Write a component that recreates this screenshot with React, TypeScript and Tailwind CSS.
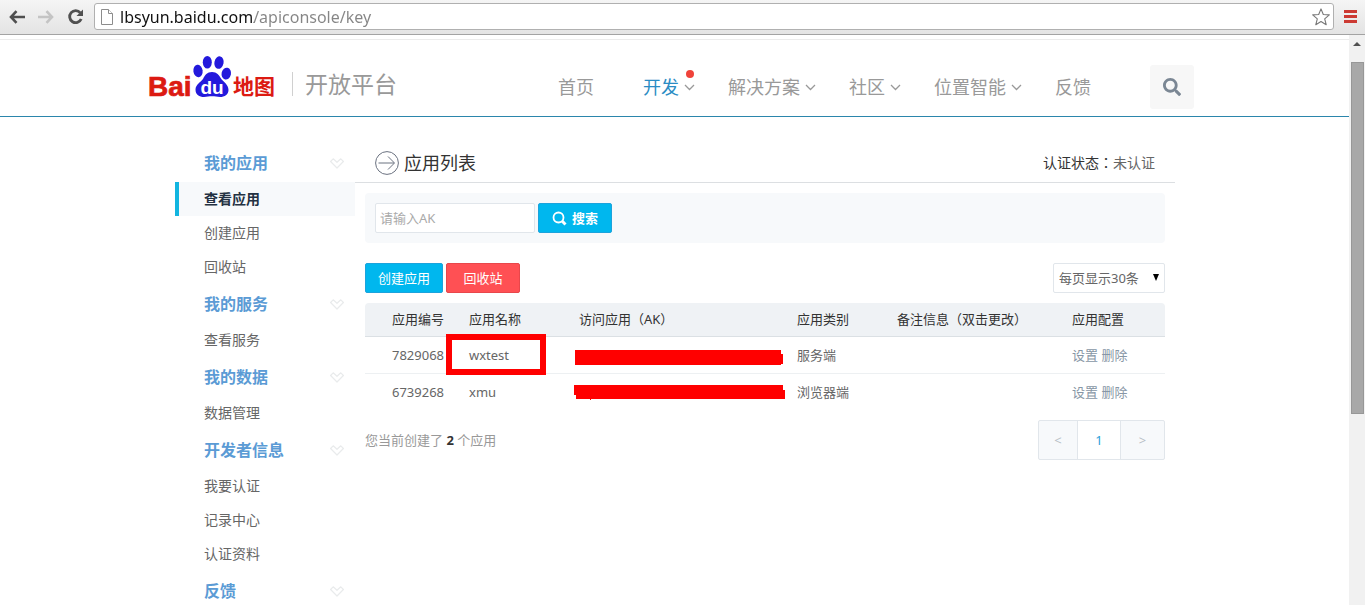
import { useState } from 'react'
import { FaSearch } from 'react-icons/fa'
import { cva } from 'class-variance-authority'
import clsx from 'clsx'

interface NavItem {
  label: string
  menu?: boolean
  active?: boolean
  dot?: boolean
}

interface AppRow {
  id: string
  name: string
  kind: string
  mask: string
  highlighted?: boolean
}

const navItems: NavItem[] = [
  { label: '首页' },
  { label: '开发', menu: true, active: true, dot: true },
  { label: '解决方案', menu: true },
  { label: '社区', menu: true },
  { label: '位置智能', menu: true },
  { label: '反馈' },
]

const sideGroups = [
  { title: '我的应用', items: ['查看应用', '创建应用', '回收站'] },
  { title: '我的服务', items: ['查看服务'] },
  { title: '我的数据', items: ['数据管理'] },
  { title: '开发者信息', items: ['我要认证', '记录中心', '认证资料'] },
  { title: '反馈', items: [] },
]

const apps: AppRow[] = [
  { id: '7829068', name: 'wxtest', kind: '服务端', mask: 'M1 2H207V6H209V16H207V17H1Z', highlighted: true },
  { id: '6739268', name: 'xmu', kind: '浏览器端', mask: 'M0 0H209V5H211V14H17V15H16V14H2V10H0Z' },
]

const button = cva('flex h-[30px] items-center justify-center rounded-xs border text-white', {
  variants: {
    tone: {
      blue: 'border-[#1ca3dc] bg-[#00b7ee]',
      red: 'border-[#e8474b] bg-[#ff5054]',
    },
  },
})

function BrowserBar() {
  return (
    <div className="flex h-[35px] shrink-0 items-center border-b border-[#a3a3a3] bg-linear-to-b from-[#f5f5f5] to-[#e4e4e4] pr-2 pb-px pl-[9px]">
      <button type="button" aria-label="后退" className="w-[29px]">
        <svg width="16" height="14" viewBox="0 0 16 14" fill="none" stroke="#4f4f4f" strokeWidth="2.6">
          <path d="M7.5 1.2 2 7l5.5 5.8M2 7h14" />
        </svg>
      </button>
      <button type="button" aria-label="前进" className="w-[29px]">
        <svg width="16" height="14" viewBox="0 0 16 14" fill="none" stroke="#c4c4c4" strokeWidth="2.6">
          <path d="M8.5 1.2 14 7l-5.5 5.8M14 7H0" />
        </svg>
      </button>
      <button type="button" aria-label="重新加载" className="w-[27px]">
        <svg width="18" height="16" viewBox="0 0 18 16" fill="none">
          <path d="M13.3 3.8A6 6 0 1 0 14.2 10" stroke="#505050" strokeWidth="2.8" />
          <path d="M16 0.5V7H9.5Z" fill="#505050" />
        </svg>
      </button>
      <div className="flex h-[27px] min-w-0 flex-1 items-center rounded-[3px] border border-[#b0b0b0] bg-white pr-[3px] pl-[6px]">
        <svg width="12" height="16" viewBox="0 0 12 16" fill="#fff" stroke="#8c8c8c" className="shrink-0">
          <path d="M0.5 0.5H7.5L11.5 4.5V15.500H0.5Z" />
          <path d="M7.5 0.5V4.5H11.5" />
        </svg>
        <input
          type="text"
          aria-label="地址"
          defaultValue="lbsyun.baidu.com/apiconsole/key"
          className="ml-[7px] h-6 min-w-0 flex-1 bg-[linear-gradient(to_right,#111_134px,#858585_134px)] bg-clip-text text-[16px] leading-6 text-transparent outline-none"
        />
        <button type="button" aria-label="收藏" className="shrink-0">
          <svg width="18" height="18" viewBox="0 0 18 18" fill="#fff" stroke="#777" strokeWidth="1.1" strokeLinejoin="round">
            <path d="M9 0.9 11.3 6.5 17.3 6.9 12.7 10.8 14.2 16.7 9 13.5 3.8 16.7 5.3 10.8 0.7 6.9 6.7 6.5Z" />
          </svg>
        </button>
      </div>
      <button type="button" aria-label="菜单" className="ml-[10px] flex w-[13px] flex-col gap-[2px]">
        <span className="h-[3px] bg-[#cc3a33]" />
        <span className="h-[3px] bg-[#cc3a33]" />
        <span className="h-[3px] bg-[#cc3a33]" />
      </button>
    </div>
  )
}

function Logo() {
  return (
    <svg width="130" height="48" viewBox="-1 0 130 48" className="-ml-px shrink-0" role="img" aria-label="百度地图">
      <text
        x="-1"
        y="40.5"
        fontSize="28"
        fill="#dc1a12"
        stroke="#dc1a12"
        strokeWidth="0.7"
        fontFamily="'Liberation Sans', sans-serif"
        fontWeight="700"
      >
        Bai
      </text>
      <g fill="#2319dc">
        <ellipse cx="49" cy="16" rx="4.6" ry="6.2" transform="rotate(-8 49 16)" />
        <ellipse cx="58.3" cy="7.2" rx="4.5" ry="6.3" />
        <ellipse cx="70" cy="7.6" rx="4.6" ry="6.3" transform="rotate(12 70 7.6)" />
        <ellipse cx="77.3" cy="18.6" rx="4.7" ry="6" transform="rotate(12 77.3 18.6)" />
        <path d="M63 17c5 0 7 3 9 6.500 2 3 7.500 6 7.500 11.500 0 4.500-4 7-8.500 7-3 0-5-.7-8-.7s-5 .7-8 .7c-4.500 0-8.500-2-8.500-7.500 0-5 5.500-7.500 7.500-10.500 2-4 4-7 9-7Z" />
      </g>
      <text x="51.500" y="38.500" fontSize="19" fill="#fff" fontFamily="'Liberation Sans', sans-serif" fontWeight="700">
        du
      </text>
      <text x="84" y="39" fontSize="21" fill="#dc1a12" fontFamily="'Noto Sans CJK SC', sans-serif" fontWeight="700">
        地图
      </text>
    </svg>
  )
}

function SiteHeader() {
  return (
    <header className="border-b border-[#2b86ac]">
      <div className="h-[5px] border-b border-[#ececec]" />
      <div className="mx-auto flex h-[76px] w-full max-w-[1051px] items-end pr-[6px] pb-[7px]">
        <a href="#" className="flex items-end pb-[6px]">
          <Logo />
          <span className="mr-3 mb-[7px] ml-[14px] h-6 w-px bg-[#d0d0d0]" />
          <span className="mb-[7px] text-[23px] leading-6 whitespace-nowrap text-[#999]">开放平台</span>
        </a>
        <nav className="ml-auto flex h-11 items-center gap-[33px] text-[18px] leading-6 text-[#999]">
          {navItems.map((item) => (
            <a
              key={item.label}
              href="#"
              className={clsx('relative flex items-center gap-[5px] whitespace-nowrap', item.active && 'text-[#2b8cc4]')}
            >
              {item.label}
              <svg width="11" height="7" viewBox="0 0 11 7" fill="none" stroke="#999" strokeWidth="1.3">
                {item.menu && <path d="M1 1 5.5 5.5 10 1" />}
              </svg>
              {item.dot && <span className="absolute -top-[5px] right-[1px] size-2 rounded-full bg-[#f0433a]" />}
            </a>
          ))}
        </nav>
        <button type="button" aria-label="搜索" className="ml-[43px] flex size-11 items-center justify-center rounded-[3px] bg-[#f7f7f7]">
          <FaSearch className="size-[18px] text-[#7b8794]" />
        </button>
      </div>
    </header>
  )
}

function HeartChevron() {
  return (
    <svg width="14" height="13" viewBox="0 -2 14 13" fill="none" stroke="#e9ebec" strokeWidth="1.2" strokeLinejoin="round">
      <path d="M0.600 3.500 3.200 0.800 7 4.300 10.800 0.800 13.400 3.500 7 10Z" />
    </svg>
  )
}

function Sidebar() {
  const [current, setCurrent] = useState('查看应用')

  return (
    <aside className="w-[180px] shrink-0">
      {sideGroups.map((group) => (
        <section key={group.title}>
          <h2 className="flex h-[39px] items-center justify-between pr-[11px] pl-[29px] text-[16px] leading-6 font-bold text-[#5b9bd5]">
            {group.title}
            <HeartChevron />
          </h2>
          {group.items.map((item) => (
            <a
              key={item}
              href="#"
              onClick={() => setCurrent(item)}
              className={clsx(
                'flex h-[34px] items-center border-l-4 pl-[25px] text-[14px] leading-5',
                item === current
                  ? 'border-[#12b5e0] bg-[#f7f9fb] font-bold text-[#233142]'
                  : 'border-transparent text-[#666]',
              )}
            >
              {item}
            </a>
          ))}
        </section>
      ))}
    </aside>
  )
}

function AppTable() {
  return (
    <table className="mt-[10px] w-full table-fixed text-left text-[13px] leading-5">
      <thead className="bg-[#eff2f5] font-['Noto_Sans','Noto_Sans_CJK_TC',sans-serif] text-[#333]">
        <tr className="h-[33px] border-b border-[#dbe0e4]">
          <th className="w-[104px] rounded-tl-sm pl-[27px] font-normal">应用编号</th>
          <th className="w-[110px] font-normal">应用名称</th>
          <th className="w-[218px] font-normal">访问应用（AK）</th>
          <th className="w-[100px] font-normal">应用类别</th>
          <th className="w-[175px] font-normal">备注信息（双击更改）</th>
          <th className="rounded-tr-sm font-normal">应用配置</th>
        </tr>
      </thead>
      <tbody className="text-[#666]">
        {apps.map((app) => (
          <tr key={app.id} className="h-[37px] border-b border-[#edf0f2] last:border-b-0">
            <td className="pl-[27px]">{app.id}</td>
            <td className="relative">
              {app.name}
              {app.highlighted && (
                <span className="absolute -top-[3px] -left-[23px] h-[41px] w-[100px] border-6 border-[#f00]" />
              )}
            </td>
            <td className="relative">
              {/* key is blacked out */}
              <svg width="212" height="17" viewBox="0 0 212 17" fill="#f00" className="absolute top-[11px] -left-[5px]">
                <path d={app.mask} />
              </svg>
            </td>
            <td>{app.kind}</td>
            <td />
            <td className="text-[#8796a5]">
              <a href="#">设置</a> <a href="#">删除</a>
            </td>
          </tr>
        ))}
      </tbody>
    </table>
  )
}

function Pagination() {
  return (
    <div className="flex h-10 rounded-xs border border-[#e1e6eb] bg-[#f7f9fb] text-[13px] text-[#b8bfc6]">
      <button type="button" className="w-[39px] border-r border-[#e1e6eb]">
        &lt;
      </button>
      <button type="button" className="w-[43px] border-r border-[#e1e6eb] bg-white text-[#2ba0d8]">
        1
      </button>
      <button type="button" className="w-[43px]">
        &gt;
      </button>
    </div>
  )
}

function Scrollbar() {
  return (
    <div className="flex w-4 shrink-0 flex-col items-center bg-[#f1f1f1]">
      <svg width="8" height="4" viewBox="0 0 8 4" fill="#505050" className="mt-[7px]">
        <path d="M4 0 8 4H0Z" />
      </svg>
      <div className="mt-4 h-[352px] w-[13px] border border-[#979797] bg-[#a8a8a8]" />
    </div>
  )
}

export default function App() {
  return (
    <div className="flex h-screen flex-col overflow-hidden bg-white font-['Noto_Sans','Noto_Sans_CJK_SC',sans-serif]">
      <BrowserBar />
      <div className="flex min-h-0 flex-1">
        <div className="min-w-0 flex-1 overflow-hidden">
          <SiteHeader />
          <div className="mx-auto flex w-full max-w-[1001px] pt-[26px] pl-px">
            <Sidebar />
            <main className="min-w-0 flex-1">
              <div className="flex h-10 items-center border-b border-[#dcdfe2] px-5">
                <svg width="24" height="24" viewBox="0 0 24 24" fill="none" stroke="#6b7280">
                  <circle cx="12" cy="12" r="11.4" />
                  <path d="M3.5 12H19M13 5.5 19.5 12 13 18.5" />
                </svg>
                <h1 className="ml-[5px] text-[18px] leading-6 text-[#333]">应用列表</h1>
                <p className="ml-auto font-['Noto_Sans','Noto_Sans_CJK_TC',sans-serif] text-[14px] leading-5 text-[#666]">
                  <span className="text-[#333]">认证状态：</span>未认证
                </p>
              </div>

              <div className="mx-[10px] mt-[10px] text-[13px] leading-5">
                <form className="flex gap-[3px] rounded-sm bg-[#f7f9fb] p-[10px]" onSubmit={(e) => e.preventDefault()}>
                  <input
                    type="text"
                    aria-label="AK"
                    placeholder="请输入AK"
                    className="h-[30px] w-40 rounded-xs border border-[#e1e6eb] bg-white px-1 placeholder:text-[#aaa]"
                  />
                  <button type="submit" className={clsx(button({ tone: 'blue' }), 'w-[74px] gap-[5px] font-bold')}>
                    <svg width="15" height="15" viewBox="0 0 15 15" fill="none" stroke="#fff">
                      <circle cx="6.5" cy="6.5" r="5" strokeWidth="1.8" />
                      <path d="M10.3 10.3 13.5 13.5" strokeWidth="3" />
                    </svg>
                    搜索
                  </button>
                </form>

                <div className="mt-5 flex gap-[3px]">
                  <button type="button" className={clsx(button({ tone: 'blue' }), 'w-[78px]')}>
                    创建应用
                  </button>
                  <button type="button" className={clsx(button({ tone: 'red' }), 'w-[74px]')}>
                    回收站
                  </button>
                  <div className="relative ml-auto">
                    <select
                      aria-label="每页显示条数"
                      className="h-[30px] w-28 appearance-none rounded-xs border border-[#e1e6eb] bg-white pl-[5px] text-[#666]"
                    >
                      <option>每页显示30条</option>
                      <option>每页显示50条</option>
                    </select>
                    <svg width="6" height="7" viewBox="0 0 6 7" className="pointer-events-none absolute top-[11px] right-[6px]">
                      <path d="M0 0H6L3 7Z" />
                    </svg>
                  </div>
                </div>

                <AppTable />

                <div className="mt-[10px] flex items-center justify-between">
                  <p className="text-[#999]">
                    您当前创建了 <b className="text-[#333]">2</b> 个应用
                  </p>
                  <Pagination />
                </div>
              </div>
            </main>
          </div>
        </div>
        <Scrollbar />
      </div>
    </div>
  )
}
